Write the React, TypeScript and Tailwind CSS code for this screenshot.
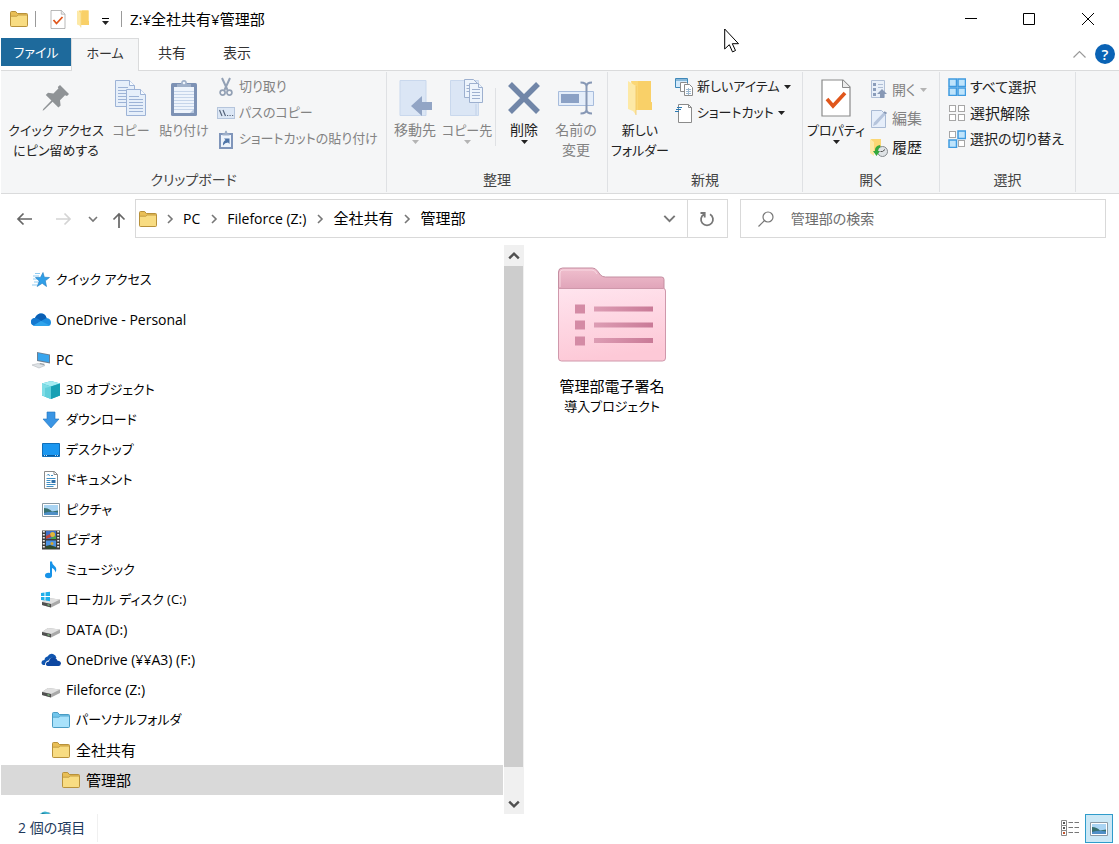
import type { ReactNode } from 'react'
import clsx from 'clsx'

/* ---------- icons ---------- */

function FolderIcon({ fill = '#f8dc82', tab = '#e9bf56', stroke = '#b8913a' }: { fill?: string; tab?: string; stroke?: string }) {
  return (
    <svg width="20" height="18" viewBox="0 0 20 18">
      <path d="M1.5 15.5V2.5q0-1 1-1h4.2l1.6 2h9.2q1 0 1 1v11q0 1-1 1h-15q-1 0-1-1z" fill={tab} stroke={stroke} />
      <path d="M2 6.5h5.8l1.4-1.2H18v10q0 .7-.7.7H2.7q-.7 0-.7-.7z" fill={fill} />
      <path d="M2 6.2h5.8l1.4-1.2H18" fill="none" stroke={stroke} strokeWidth=".7" />
    </svg>
  )
}

function OpenFolderIcon({ className }: { className: string }) {
  return (
    <svg viewBox="0 0 24 36" className={className}>
      <path d="M3 1h20v21h1v8H8z" fill="#fbd775" />
      <path d="M10 1h13v21l1 1v7H10z" fill="#f9d068" />
      <path d="M0 1l8 5v29l-3-4-5-2z" fill="#fde9a6" />
      <path d="M8 6v29" stroke="#eec15a" strokeWidth=".7" />
    </svg>
  )
}

function CheckPageIcon({ className }: { className: string }) {
  return (
    <svg viewBox="0 0 30 38" className={className}>
      <path d="M1 1h21l7 7v29H1z" fill="#fff" stroke="#8a8a8a" strokeWidth="1.2" />
      <path d="M21.5 1v7.5H29" fill="#ececec" stroke="#8a8a8a" />
      <path d="M6 20l6 7 12-13" fill="none" stroke="#e0561b" strokeWidth="3.6" />
    </svg>
  )
}

function Caret({ muted = false }: { muted?: boolean }) {
  return (
    <svg width="7" height="4" viewBox="0 0 7 4" className="shrink-0">
      <path d="M0 0h7L3.5 4z" fill={muted ? '#b4b4b4' : '#222'} />
    </svg>
  )
}

function Chevron({ dir, color = '#777', size = 10, width = 1.6 }: { dir: 'up' | 'down' | 'right'; color?: string; size?: number; width?: number }) {
  const d = { up: 'M1 7l4-4 4 4', down: 'M1 3l4 4 4-4', right: 'M3 1l4 4-4 4' }[dir]
  return (
    <svg width={size} height={size} viewBox="0 0 10 10">
      <path d={d} fill="none" stroke={color} strokeWidth={width} />
    </svg>
  )
}

const PinIcon = (
  <svg width="28" height="28" viewBox="0 0 28 28">
    <path d="M18 1l9 9-2 2-2-.8-5 5 .6 5.2-2.2 2.2-5.8-5.8L2 26l-1.4.8L1.2 25l8.2-8.6L3.8 11 6 8.8l5.4.6 5-5L15.800 3z" fill="#8f9396" />
  </svg>
)

const CopyIcon = (
  <svg width="32" height="38" viewBox="0 0 32 38">
    <g fill="#e6effa" stroke="#9db3d6">
      <path d="M.5 1.500h14l5 5v21H.5z" />
      <path d="M14.500 1.500v5h5" fill="#f7fbff" />
      <path d="M3 8.500h10M3 11.500h14M3 14.500h8M3 17.500h8M3 20.500h8M3 23.500h8" />
      <path d="M11.500 10.500h14l5 5v21h-19z" />
      <path d="M25.500 10.500v5h5" fill="#f7fbff" />
      <path d="M14 17.500h10M14 20.500h14M14 23.500h14M14 26.500h14M14 29.500h14M14 32.500h14" />
    </g>
  </svg>
)

const PasteIcon = (
  <svg width="28" height="38" viewBox="0 0 28 38">
    <rect x="1" y="4" width="26" height="33" rx="1.500" fill="#7d92b5" />
    <path d="M4 8h20v26H4z" fill="#eef4fc" />
    <path d="M4 12.500h20M4 15.500h20M4 18.500h20M4 21.500h20M4 24.500h20M4 27.500h20M4 30.500h20" stroke="#c6d5ea" />
    <path d="M7 8V5h4q0-4 3-4t3 4h4v3z" fill="#9fb0c9" />
    <circle cx="14" cy="4" r="1.300" fill="#eef4fc" />
    <path d="M20 34h4v-4z" fill="#b9c9e0" />
  </svg>
)

const CutIcon = (
  <svg width="14" height="20" viewBox="0 0 14 20" fill="none" stroke="#93a1b5">
    <path d="M3 1l5.500 12M11 1L5.500 13" strokeWidth="2" />
    <circle cx="3.600" cy="15.600" r="2.500" strokeWidth="1.700" />
    <circle cx="10.400" cy="15.600" r="2.500" strokeWidth="1.700" />
  </svg>
)

const PathIcon = (
  <svg width="18" height="12" viewBox="0 0 18 12">
    <rect x=".5" y=".5" width="17" height="11" fill="#dce7f5" stroke="#b5c5dc" />
    <path d="M2.500 3l2.500 6M6 3l2.500 6" stroke="#56657c" strokeWidth="1.200" />
    <path d="M10 8.500h1.200M12.500 8.500h1.200M15 8.500h1.200" stroke="#56657c" strokeWidth="1.200" />
  </svg>
)

const PasteShortcutIcon = (
  <svg width="14" height="19" viewBox="0 0 14 19">
    <path d="M1 4h12v14H1z" fill="#eef4fc" stroke="#7f95ba" strokeWidth="2" />
    <path d="M3.500 5.500v-2h2Q6 .5 7 .5t1.500 3h2v2z" fill="#9fb0c9" />
    <path d="M4 15.500q-.5-4 2.500-5.500L5 8.500h5.500V14L9 12.500q-3 0-5 3z" fill="#4f75a8" />
  </svg>
)

const MoveIcon = (
  <svg width="34" height="38" viewBox="0 0 34 38">
    <path d="M2 1.500h26v35H2z" fill="#dbe6f5" stroke="#c9d8ed" />
    <path d="M13 27L24 17v6h10v8H24v6z" fill="#92a5c5" />
  </svg>
)

const CopyToIcon = (
  <svg width="34" height="38" viewBox="0 0 34 38">
    <path d="M.5 1.500h28v35H.5z" fill="#dbe6f5" stroke="#c9d8ed" />
    <path d="M26 25v11" stroke="#c1d1e8" />
    <g fill="#edf4fc" stroke="#9db0cf">
      <path d="M14.500.5h9l4 4v14h-13z" />
      <path d="M16.500 6.500h8M16.500 9.500h8M16.500 12.500h8" />
      <path d="M19.500 4.500h9l4 4v15h-13z" />
      <path d="M28.500 4.500v4h4M22 10.500h8M22 13.500h8M22 16.500h8M22 19.500h8" />
    </g>
  </svg>
)

const DeleteIcon = (
  <svg width="32" height="32" viewBox="0 0 32 32">
    <path d="M2 2l28 28M30 2L2 30" stroke="#7186a8" strokeWidth="5.500" />
  </svg>
)

const RenameIcon = (
  <svg width="37" height="34" viewBox="0 0 37 34">
    <path d="M.5 10.500h35v14H.5z" fill="#e5eefa" stroke="#a7bcdc" />
    <path d="M3 13h18v9H3z" fill="#8ba1c5" />
    <path d="M22.500 1.500q6 0 6 4v23q0 4-6 4M34 1.500q-5.500 0-5.500 4v23q0 4 5.500 4" fill="none" stroke="#8798b5" strokeWidth="2" />
  </svg>
)

const NewItemIcon = (
  <svg width="18" height="18" viewBox="0 0 18 18">
    <path d="M.5.500h12v9H.5z" fill="#d3eafb" stroke="#3f88b9" />
    <path d="M1 2h11" stroke="#3f88b9" />
    <path d="M5.500 4.500h6l1 1v8h-7z" fill="#fff" stroke="#8b8b8b" />
    <path d="M9.500 6.500h5l3 3v8h-8z" fill="#fff" stroke="#8b8b8b" />
    <path d="M11 11.500h5M11 13.500h5M11 15.500h5M13.500 10v7" stroke="#9db9d0" />
  </svg>
)

const ShortcutIcon = (
  <svg width="18" height="19" viewBox="0 0 18 19">
    <path d="M3.500.500h10l3 3v15h-13z" fill="#fff" stroke="#8b8b8b" />
    <path d="M13.500.500v3h3" fill="none" stroke="#8b8b8b" />
    <path d="M2 3.500h5M1 5.500h5M0 7.500h4" stroke="#2c7ab3" />
  </svg>
)

const OpenIcon = (
  <svg width="16" height="19" viewBox="0 0 16 19">
    <path d="M.5.500h13v17H.5z" fill="#e9f0f9" stroke="#b0bfd6" />
    <path d="M2 3h3v3H2zM2 8h3v3H2zM2 13h3v3H2z" fill="#8b9dbb" />
    <path d="M7 4.500h5M7 7.500h5" stroke="#b0bfd6" />
    <path d="M11 9l5 5h-3v4H9v-4H6z" fill="#8798b5" />
  </svg>
)

const EditIcon = (
  <svg width="16" height="18" viewBox="0 0 16 18">
    <path d="M.5.500h10l4 4v13H.5z" fill="#e6eefa" stroke="#a9bad4" />
    <path d="M2 16l1-3.500L13 2l2.500 1.500L5.500 14.500z" fill="#b5c4dc" />
    <path d="M13 2l2.500 1.500" stroke="#8798b5" strokeWidth="2" />
  </svg>
)

const HistoryIcon = (
  <svg width="18" height="18" viewBox="0 0 18 18">
    <path d="M1 0h10v14H3z" fill="#fbd775" />
    <path d="M0 0l4 3v14l-4-3z" fill="#fde9a6" />
    <circle cx="12.500" cy="12.500" r="5" fill="#dfe3e6" stroke="#84898d" />
    <path d="M12.500 12.500l2.500-2M12.500 12.500h-2" fill="none" stroke="#555" />
    <path d="M10 6Q4.500 7 5 12H3l3.500 5 3.500-5H8q0-3 2.500-4z" fill="#35a83d" />
  </svg>
)

function GridIcon({ cells, line }: { cells: string[]; line: string[] }) {
  return (
    <svg width="18" height="18" viewBox="0 0 18 18">
      {[[1, 1], [10, 1], [1, 10], [10, 10]].map(([x, y], i) => (
        cells[i] === '#fff'
          ? <rect key={i} x={x + .5} y={y + .5} width="6" height="6" fill={cells[i]} stroke={line[i]} />
          : <rect key={i} x={x} y={y} width="7.500" height="7.500" fill={cells[i]} stroke={line[i]} strokeWidth="1.500" />
      ))}
    </svg>
  )
}

const BLUE = '#3f9be0'
const SKY = '#bfe4fb'
const SelectAllIcon = <GridIcon cells={[SKY, SKY, SKY, SKY]} line={[BLUE, BLUE, BLUE, BLUE]} />
const SelectNoneIcon = <GridIcon cells={['#fff', '#fff', '#fff', '#fff']} line={['#a6a6a6', '#a6a6a6', '#a6a6a6', '#a6a6a6']} />
const InvertIcon = <GridIcon cells={['#fff', SKY, SKY, '#fff']} line={['#a6a6a6', BLUE, BLUE, '#a6a6a6']} />

const StarIcon = (
  <svg width="20" height="18" viewBox="0 0 20 18">
    <path d="M2 5h6M4 2.500h5M2 8h4M3 11h4M1 14h5" stroke="#8fcbf2" />
    <path d="M12 1.500l1.300 4.700 5.200.3-4.200 3.300 1.200 5.700-4.300-3.200-5 3.200 2-5.500-3.700-3.500 5-.1z" fill="#2f9fe8" stroke="#1d78bd" strokeWidth=".6" />
  </svg>
)

const CloudIcon = (
  <svg width="20" height="14" viewBox="0 0 20 14">
    <path d="M4 13Q0 12.500 0 9t4-4Q6 .500 10 .500q4.500 0 5.500 4.500Q20 5.500 20 9.500 20 13 16.500 13z" fill="#1d8ee0" />
    <path d="M4 5Q6 .500 10 .500q4.500 0 5.500 4.500L10 8z" fill="#0a5fb4" />
    <path d="M0 9q0-4 4-4 3 0 6 3l-7.500 4.500Q0 11.500 0 9z" fill="#1478cf" />
    <path d="M2.500 12.600L10 8l8.500 4.300q-1 .7-2 .7H4z" fill="#2fa4ec" />
  </svg>
)

const PcIcon = (
  <svg width="20" height="18" viewBox="0 0 20 18">
    <path d="M6 1l13 2.500v9L6 10z" fill="#6b7f93" />
    <path d="M7 2l11 2.200v7L7 9z" fill="#37a5ee" />
    <path d="M9 12l5 1-2 1.500-4-1z" fill="#8f979e" />
    <path d="M1 14l6-1.500 7 2L8 17z" fill="#dfe3e6" stroke="#b4b9bd" strokeWidth=".6" />
  </svg>
)

const CubeIcon = (
  <svg width="20" height="20" viewBox="0 0 20 20">
    <path d="M10 1l9 2.500v12L10 19l-9-3.500v-12z" fill="#2bb5c7" />
    <path d="M1 3.500L10 1l9 2.500L10 6.500z" fill="#a5ecf2" />
    <path d="M1 3.500l9 3V19l-9-3.500z" fill="#7fdde6" />
    <path d="M10 6.500l9-3v12L10 19z" fill="#17a0b4" />
    <path d="M4 8l6-1.500V19l-6-2.300z" fill="#4bc6d4" opacity=".6" />
  </svg>
)

const DownloadIcon = (
  <svg width="20" height="18" viewBox="0 0 20 18">
    <path d="M6 1h8v7h4l-8 9-8-9h4z" fill="#3a95e4" stroke="#1f72bd" strokeWidth=".6" />
  </svg>
)

const DesktopIcon = (
  <svg width="20" height="14" viewBox="0 0 20 14">
    <path d="M1.500.500h17v13h-17z" fill="#1b97f0" stroke="#0f6fba" />
    <path d="M2 12.500h16" stroke="#0a5a9c" />
    <path d="M3 12.500h3M14 12.500h3" stroke="#bfe0f8" strokeDasharray="1 1" />
  </svg>
)

const DocumentIcon = (
  <svg width="20" height="18" viewBox="0 0 20 18">
    <path d="M3.500.500h10l3 3v14h-13z" fill="#fff" stroke="#8b8b8b" />
    <path d="M13 .500v3h3.500" fill="none" stroke="#8b8b8b" />
    <path d="M6 4.500L7.500 3l1 2M10 4.500h2M5.500 7.500h9M5.500 9.500h4M5.500 11.500h4M5.500 13.500h9M5.500 15.500h7" fill="none" stroke="#3f8ec4" />
    <path d="M10.500 9h4v3h-4z" fill="#2f6fa8" />
  </svg>
)

const PictureIcon = (
  <svg width="20" height="14" viewBox="0 0 20 14">
    <path d="M1.500.500h17v13h-17z" fill="#fff" stroke="#8b9aa5" />
    <path d="M3 2h14v10H3z" fill="#a9d4f3" />
    <path d="M3 5q5 0 8 3.500l6-1V12H3z" fill="#37706f" />
    <path d="M3 10q7-2 14-.500V12H3z" fill="#4f8fc6" />
  </svg>
)

const VideoIcon = (
  <svg width="20" height="20" viewBox="0 0 20 20">
    <path d="M1 .500h18v19H1z" fill="#3c3c3c" />
    <path d="M2.800 1v18M17.200 1v18" stroke="#eee" strokeWidth="2" strokeDasharray="1.500 1.500" />
    <path d="M5 1h10v8H5z" fill="#3f72c9" />
    <path d="M5 10.500h10V19H5z" fill="#4c93e3" />
    <circle cx="11.500" cy="4.500" r="2.500" fill="#e2b93a" />
    <path d="M5 6l4-2 1 3-5 2z" fill="#c3473c" />
    <path d="M10 8l5-2v3h-5z" fill="#4aa548" />
    <path d="M5 16l4-1 6 2v2H5z" fill="#2f4a2c" />
    <circle cx="11" cy="13.500" r="1.500" fill="#d7a82f" />
  </svg>
)

const MusicIcon = (
  <svg width="20" height="18" viewBox="0 0 20 18">
    <ellipse cx="7.500" cy="14.500" rx="3.500" ry="2.800" fill="#1793e8" />
    <path d="M9 .500h2q0 3 2.500 4.500 3 2.500 1 6.500-.500-3.500-3.500-4.500V14.500H9z" fill="#1793e8" />
  </svg>
)

const Drive = (
  <>
    <path d="M1 11l6-4 12 1.500v3.500L10 16.500l-9-2.500z" fill="#a9a9a9" />
    <path d="M1 11l6-4 12 1.500-9 4.500z" fill="#e0e0e0" />
    <path d="M1 11l9 2v3.500L1 14z" fill="#505050" />
    <path d="M6.500 13.800l2 .400" stroke="#8fe08f" />
  </>
)

const DriveIcon = <svg width="20" height="18" viewBox="0 0 20 18">{Drive}</svg>

const SystemDriveIcon = (
  <svg width="20" height="18" viewBox="0 0 20 18">
    {Drive}
    <path d="M0 2l3.500-.5V5H0zM4.500 1.300L9 .700V5H4.500zM0 6h3.500v3.500L0 9zM4.500 6H9v4.200l-4.500-.6z" fill="#1fb0ea" />
  </svg>
)

const OldCloudIcon = (
  <svg width="20" height="14" viewBox="0 0 20 14">
    <path d="M2 12Q0 11 .500 9T3.500 7q0-3 3-3.500Q8.500 0 12 1q3 1 3.500 4H12Q9 4 7.500 7.500 4 8 4 12z" fill="#1056b0" />
    <path d="M7 13q-2.500-.5-2-2.500T8 8.500q.5-4 4-4t4.300 3Q20 8 20 10.500 19.500 13 17.500 13z" fill="#0d47a1" />
  </svg>
)

const NetworkIcon = (
  <svg width="20" height="18" viewBox="0 0 20 18">
    <path d="M6 3l10-2 3 3v7L6 10z" fill="#8fb9c9" />
    <circle cx="12" cy="6" r="5.500" fill="#3fb3d0" />
    <path d="M9 3l4 1" stroke="#1c6f88" strokeWidth="2" />
  </svg>
)

const SearchIcon = (
  <svg width="16" height="16" viewBox="0 0 16 16" fill="none" stroke="#777" strokeWidth="1.200">
    <circle cx="10" cy="6" r="5" />
    <path d="M6.500 9.500L.500 15.500" />
  </svg>
)

const ProjectFolderIcon = (
  <svg width="110" height="96" viewBox="0 0 110 96">
    <defs>
      <linearGradient id="back" x1="0" y1="0" x2="0" y2="1">
        <stop offset="0" stopColor="#f0bfce" />
        <stop offset="1" stopColor="#dd9fb5" />
      </linearGradient>
      <linearGradient id="front" x1="0" y1="0" x2=".2" y2="1">
        <stop offset="0" stopColor="#ffe4ee" />
        <stop offset="1" stopColor="#fdc9d7" />
      </linearGradient>
      <linearGradient id="bar" x1="0" y1="0" x2="1" y2="0">
        <stop offset="0" stopColor="#dd9db4" />
        <stop offset="1" stopColor="#c97a97" />
      </linearGradient>
    </defs>
    <path d="M1.500 26V5q0-4 4-4h30q3 0 5 3l3 4q2 2 5 2h56q2.500 0 2.500 2.500V26z" fill="url(#back)" stroke="#c48ea1" />
    <path d="M3 20V6q0-3 3-3h29q3 0 5 4" fill="none" stroke="#f8d7e1" />
    <path d="M1.500 21.500h105q2 0 2 2.500v67q0 3-3 3H4.500q-3 0-3-3z" fill="url(#front)" stroke="#cf98ab" />
    <path d="M18 37.500h10v9H18zM18 53.500h10v9H18zM18 69.500h10v9H18z" fill="#d48ba5" />
    <path d="M37 39.500h59v5H37zM37 55.500h59v5H37zM37 71h59v5H37z" fill="url(#bar)" />
  </svg>
)

/* ---------- ribbon ---------- */

function Group({ label, className, inset, children }: { label: string; className: string; inset: string; children: ReactNode }) {
  return (
    <section aria-label={label} className={clsx('flex shrink-0 flex-col border-r border-[#dfe1e4]', className)}>
      <div className={clsx('flex flex-1 items-start gap-1', inset)}>{children}</div>
      <h2 className="pb-0.5 text-center text-sm leading-5 text-[#444]">{label}</h2>
    </section>
  )
}

function BigButton({ icon, lines, className, disabled, caret, small }: {
  icon: ReactNode; lines: string[]; className: string; disabled?: boolean; caret?: boolean; small?: boolean
}) {
  return (
    <button disabled={disabled} className={clsx('flex shrink-0 flex-col items-center pt-1', className, disabled ? 'text-[#838383]' : 'text-[#222]')}>
      <span className="flex h-11 items-center">{icon}</span>
      {lines.map(l => <span key={l} className={clsx('leading-5 whitespace-nowrap', small ? 'text-[13px]' : 'text-sm')}>{l}</span>)}
      {caret && <Caret muted={disabled} />}
    </button>
  )
}

const TEXT = { kana: 'text-[13px]', mixed: 'text-sm', kanji: 'text-[15px]' }

function SmallButton({ icon, label, size, disabled, caret, tall }: {
  icon: ReactNode; label: string; size: keyof typeof TEXT; disabled?: boolean; caret?: boolean; tall?: boolean
}) {
  return (
    <button disabled={disabled} className={clsx('flex items-center gap-1 whitespace-nowrap', tall ? 'h-[29px]' : 'h-[26px]', TEXT[size], disabled ? 'text-[#838383]' : 'text-[#222]')}>
      <span className="flex w-[18px] justify-center">{icon}</span>
      <span>{label}</span>
      {caret && <Caret muted={disabled} />}
    </button>
  )
}

function Ribbon() {
  return (
    <div className="ml-px flex h-[124px] overflow-hidden border-y border-[#dadbdc] bg-[#f5f6f7] py-px">
      <Group label="クリップボード" className="w-[386px]" inset="pl-[7px]">
        <BigButton icon={PinIcon} lines={['クイック アクセス', 'にピン留めする']} className="w-24" small />
        <BigButton icon={CopyIcon} lines={['コピー']} className="w-[46px]" disabled small />
        <BigButton icon={PasteIcon} lines={['貼り付け']} className="w-[52px]" disabled small />
        <div className="flex flex-col pt-0.5 pl-[3px]">
          <SmallButton icon={CutIcon} label="切り取り" size="kana" disabled />
          <SmallButton icon={PathIcon} label="パスのコピー" size="kana" disabled />
          <SmallButton icon={PasteShortcutIcon} label="ショートカットの貼り付け" size="kana" disabled />
        </div>
      </Group>
      <Group label="整理" className="w-[221px]" inset="pl-1">
        <BigButton icon={MoveIcon} lines={['移動先']} className="w-12" disabled caret />
        <BigButton icon={CopyToIcon} lines={['コピー先']} className="w-12" disabled caret small />
        <div className="mt-4 h-[58px] w-px bg-[#dfe1e4]" />
        <BigButton icon={DeleteIcon} lines={['削除']} className="w-12" caret />
        <BigButton icon={RenameIcon} lines={['名前の', '変更']} className="w-12" disabled />
      </Group>
      <Group label="新規" className="w-[195px]" inset="pl-1">
        <BigButton icon={<OpenFolderIcon className="h-9 w-6" />} lines={['新しい', 'フォルダー']} className="w-14" small />
        <div className="flex flex-col items-start pt-0.5 pl-[3px]">
          <SmallButton icon={NewItemIcon} label="新しいアイテム" size="kana" caret />
          <SmallButton icon={ShortcutIcon} label="ショートカット" size="kana" caret />
        </div>
      </Group>
      <Group label="開く" className="w-[137px]" inset="pl-1">
        <BigButton icon={<CheckPageIcon className="h-[38px] w-[30px]" />} lines={['プロパティ']} className="w-[58px]" caret small />
        <div className="flex flex-col items-start pt-[3px] pl-px">
          <SmallButton icon={OpenIcon} label="開く" size="mixed" disabled caret tall />
          <SmallButton icon={EditIcon} label="編集" size="kanji" disabled tall />
          <SmallButton icon={HistoryIcon} label="履歴" size="kanji" tall />
        </div>
      </Group>
      <Group label="選択" className="w-[136px]" inset="pl-2">
        <div className="flex flex-col items-start pt-0.5">
          <SmallButton icon={SelectAllIcon} label="すべて選択" size="mixed" />
          <SmallButton icon={SelectNoneIcon} label="選択解除" size="kanji" />
          <SmallButton icon={InvertIcon} label="選択の切り替え" size="mixed" />
        </div>
      </Group>
    </div>
  )
}

/* ---------- navigation tree ---------- */

type Item = { label: string; icon: ReactNode; level: number; size?: keyof typeof TEXT; selected?: boolean; spaced?: boolean }

const TREE: Item[] = [
  { label: 'クイック アクセス', icon: StarIcon, level: 0, spaced: true },
  { label: 'OneDrive - Personal', icon: CloudIcon, level: 0, size: 'mixed', spaced: true },
  { label: 'PC', icon: PcIcon, level: 0, size: 'mixed' },
  { label: '3D オブジェクト', icon: CubeIcon, level: 1 },
  { label: 'ダウンロード', icon: DownloadIcon, level: 1 },
  { label: 'デスクトップ', icon: DesktopIcon, level: 1 },
  { label: 'ドキュメント', icon: DocumentIcon, level: 1 },
  { label: 'ピクチャ', icon: PictureIcon, level: 1 },
  { label: 'ビデオ', icon: VideoIcon, level: 1 },
  { label: 'ミュージック', icon: MusicIcon, level: 1 },
  { label: 'ローカル ディスク (C:)', icon: SystemDriveIcon, level: 1 },
  { label: 'DATA (D:)', icon: DriveIcon, level: 1, size: 'mixed' },
  { label: 'OneDrive (¥¥A3) (F:)', icon: OldCloudIcon, level: 1, size: 'mixed' },
  { label: 'Fileforce (Z:)', icon: DriveIcon, level: 1, size: 'mixed' },
  { label: 'パーソナルフォルダ', icon: <FolderIcon fill="#a9e2fb" tab="#72c6ec" stroke="#4a9cc4" />, level: 2 },
  { label: '全社共有', icon: <FolderIcon />, level: 2, size: 'kanji' },
  { label: '管理部', icon: <FolderIcon />, level: 3, size: 'kanji', selected: true, spaced: true },
]

const INDENT = ['pl-[30px]', 'pl-10', 'pl-[50px]', 'pl-[60px]']

function Tree() {
  return (
    <nav className="ml-px flex w-[502px] shrink-0 flex-col overflow-hidden pt-5">
      {TREE.map(item => (
        <button
          key={item.label}
          className={clsx(
            'flex h-[30px] shrink-0 items-center gap-[5px] text-left whitespace-nowrap',
            INDENT[item.level],
            TEXT[item.size ?? 'kana'],
            item.selected && 'bg-[#d9d9d9]',
            item.spaced && 'mb-2.5',
          )}
        >
          <span className="flex w-5 justify-center">{item.icon}</span>
          {item.label}
        </button>
      ))}
      <div className="h-[30px] shrink-0 pt-1.5 pl-8">{NetworkIcon}</div>
    </nav>
  )
}

function ScrollBar() {
  return (
    <div className="ml-px flex w-5 shrink-0 flex-col bg-[#f0f0f0]">
      <button aria-label="上へスクロール" className="flex h-[21px] items-center justify-center">
        <Chevron dir="up" color="#505050" size={12} width={2} />
      </button>
      <div className="flex-1">
        <div className="mr-px h-[95%] bg-[#cdcdcd]" />
      </div>
      <button aria-label="下へスクロール" className="flex h-[21px] items-center justify-center">
        <Chevron dir="down" color="#505050" size={12} width={2} />
      </button>
    </div>
  )
}

/* ---------- bars ---------- */

function TitleBar() {
  return (
    <header className="flex h-[38px] items-center pr-px">
      <div className="flex items-center pl-[9px]">
        <FolderIcon />
        <div className="mx-1.5 h-4 w-px bg-[#9a9a9a]" />
        <button aria-label="プロパティ" className="ml-2"><CheckPageIcon className="h-[19px] w-4" /></button>
        <button aria-label="新しいフォルダー" className="ml-2.5"><OpenFolderIcon className="h-[18px] w-3.5" /></button>
        <button aria-label="クイック アクセスのカスタマイズ" className="ml-[11px] flex w-2 flex-col items-center gap-0.5 pt-1">
          <span className="h-px w-[7px] bg-black" />
          <Caret />
        </button>
        <div className="mr-2 ml-3 h-4 w-px bg-[#9a9a9a]" />
      </div>
      <h1 className="text-[15px]">Z:¥全社共有¥管理部</h1>
      <div className="ml-auto flex h-full">
        <button aria-label="最小化" className="flex w-[58px] items-center justify-center">
          <svg width="12" height="12"><path d="M0 5.500h12" stroke="#000" /></svg>
        </button>
        <button aria-label="最大化" className="flex w-[58px] items-center justify-center">
          <svg width="12" height="12"><path d="M.5.500h11v11H.500z" fill="none" stroke="#000" /></svg>
        </button>
        <button aria-label="閉じる" className="flex w-[60px] items-center justify-center">
          <svg width="12" height="12"><path d="M0 0l12 12M12 0L0 12" stroke="#000" /></svg>
        </button>
      </div>
    </header>
  )
}

function TabBar() {
  return (
    <div className="ml-px flex h-8 items-start text-sm leading-[30px] text-[#333]">
      <button className="h-7 w-[70px] bg-[#1e6a9c] text-[13px] leading-7 text-white">ファイル</button>
      <button className="relative z-10 h-[33px] w-[68px] border border-b-0 border-[#dadbdc] bg-[#f5f6f7] pb-1 text-[13px] leading-7">ホーム</button>
      <button className="w-[66px]">共有</button>
      <button className="w-16">表示</button>
      <div className="ml-auto flex h-full items-center gap-2 pr-1">
        <button aria-label="リボンの最小化"><Chevron dir="up" color="#9a9a9a" size={15} width={.8} /></button>
        <button aria-label="ヘルプ" className="h-5 w-5 rounded-full bg-[#0a63b5] text-center text-[15px] leading-5 font-semibold text-white">?</button>
      </div>
    </div>
  )
}

function AddressBar() {
  const crumbs = [
    { label: 'PC', kanji: false },
    { label: 'Fileforce (Z:)', kanji: false },
    { label: '全社共有', kanji: true },
    { label: '管理部', kanji: true },
  ]
  return (
    <div className="flex h-[51px] items-center pr-[13px] pb-0.5 pl-4">
      <div className="flex w-[119px] shrink-0 items-center">
        <button aria-label="戻る">
          <svg width="17" height="14" viewBox="0 0 17 14" fill="none" stroke="#666" strokeWidth="1.700"><path d="M16 7H2M7.500 1.500L2 7l5.500 5.500" /></svg>
        </button>
        <button aria-label="進む" disabled className="ml-[22px]">
          <svg width="17" height="14" viewBox="0 0 17 14" fill="none" stroke="#d4d4d4" strokeWidth="1.700"><path d="M1 7h14M9.500 1.500L15 7l-5.500 5.500" /></svg>
        </button>
        <button aria-label="最近表示した場所" className="ml-4"><Chevron dir="down" /></button>
        <button aria-label="上へ" className="ml-3.5 pt-1">
          <svg width="14" height="17" viewBox="0 0 14 17" fill="none" stroke="#666" strokeWidth="1.700"><path d="M7 16V2M1.500 7.500L7 2l5.500 5.500" /></svg>
        </button>
      </div>
      <div className="flex h-[39px] flex-[590] items-center border border-[#d9d9d9] pl-0.5">
        <FolderIcon />
        {crumbs.map(c => (
          <span key={c.label} className="flex items-center">
            <span className="mr-2 ml-[7px]"><Chevron dir="right" /></span>
            <button className={clsx('pr-0.5 whitespace-nowrap', c.kanji ? 'text-[15px]' : 'text-sm')}>{c.label}</button>
          </span>
        ))}
        <button aria-label="以前の場所" className="mr-[11px] ml-auto"><Chevron dir="down" size={13} width={1.5} /></button>
        <button aria-label="最新の情報に更新" className="flex h-full w-10 items-center justify-center border-l border-[#d9d9d9]">
          <svg width="16" height="16" viewBox="0 0 16 16" fill="none" stroke="#777" strokeWidth="1.800"><path d="M11 3.200A6 6 0 1 1 5 3.200M1.500 2h4.200v4.500" /></svg>
        </button>
      </div>
      <label className="ml-3 flex h-[39px] flex-[348] items-center border border-[#d9d9d9] pl-[17px]">
        {SearchIcon}
        <input aria-label="管理部の検索" placeholder="管理部の検索" className="ml-[17px] min-w-0 flex-1 text-sm outline-none placeholder:text-[#6d6d6d]" />
      </label>
    </div>
  )
}

function StatusBar() {
  return (
    <footer className="flex h-[30px] shrink-0 items-start pr-1.5 pl-[18px]">
      <span className="border-r border-[#f0f0f0] pr-3 text-sm leading-7 text-[#1e395b]">2 個の項目</span>
      <button aria-label="詳細" className="ml-auto flex h-7 w-6 items-center">
        <svg width="20" height="18" viewBox="0 0 20 18">
          <path d="M.500 1.500h5v5h-5zM.500 6.500h5v5h-5zM.500 11.500h5v5h-5z" fill="#fff" stroke="#8a8a8a" />
          <path d="M2 4h2M2 9h2" stroke="#555" strokeWidth="2" />
          <path d="M2 14h2" stroke="#c4532b" strokeWidth="2" />
          <path d="M7.500 3.500h4.500M13.500 3.500h4.500M7.500 8.500h4.500M13.500 8.500h4.500M7.500 13.500h4.500M13.500 13.500h4.500" stroke="#777" />
        </svg>
      </button>
      <button aria-label="大アイコン" className="flex h-[29px] w-7 items-center justify-center border border-[#2f9ccb] bg-[#cbe8f6]">{PictureIcon}</button>
    </footer>
  )
}

export default function App() {
  return (
    <div className="relative flex h-screen flex-col overflow-hidden bg-white font-['Open_Sans','Noto_Sans_CJK_JP',sans-serif] text-black [font-feature-settings:'palt']">
      <TitleBar />
      <TabBar />
      <Ribbon />
      <AddressBar />
      <div className="flex min-h-0 flex-1">
        <Tree />
        <ScrollBar />
        <main className="flex flex-1 items-start pt-[22px] pl-6">
          <button className="flex w-32 flex-col items-center gap-[13px] text-[15px] leading-5">
            {ProjectFolderIcon}
            <span className="flex flex-col">
              <span>管理部電子署名</span>
              <span className="text-[13px] leading-5">導入プロジェクト</span>
            </span>
          </button>
        </main>
      </div>
      <StatusBar />

      {/* mouse pointer */}
      <svg width="16" height="26" viewBox="0 0 16 26" className="absolute top-7 left-[724px]">
        <path d="M.700 1v20l4.600-4.300 3.200 7.200 3-1.400-3.200-6.800H14.500z" fill="#fff" stroke="#000" />
      </svg>
    </div>
  )
}
